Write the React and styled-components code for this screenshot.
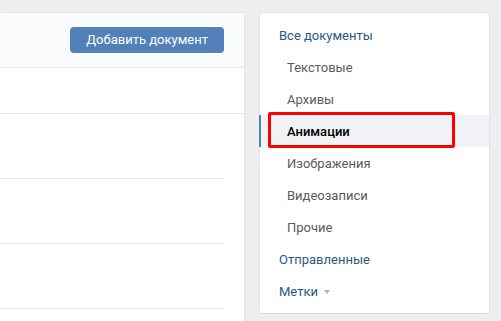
import React from "react";
import styled, { createGlobalStyle } from "styled-components";

const Global = createGlobalStyle`
  html, body { margin: 0; padding: 0; overflow: hidden; background: #edeef0; }
  body { font-family: Roboto, "Open Sans", "Liberation Sans", sans-serif; font-size: 13px; -webkit-font-smoothing: antialiased; }
  * { box-sizing: border-box; }
`;

const Page = styled.div`
  display: flex;
  align-items: flex-start;
  gap: 14px;
  padding-top: 12px;
  width: 501px;
  height: 321px;
  overflow: hidden;
`;

const Main = styled.div`
  flex: 0 0 246px;
  margin-left: -1px;
  background: #fff;
  border: 1px solid #e3e4e8;
  border-radius: 4px;
  min-height: 330px;
`;

const Header = styled.div`
  display: flex;
  justify-content: flex-end;
  align-items: center;
  height: 55px;
  padding: 0 20px;
  background: #fafbfc;
  border-bottom: 1px solid #e7e8ec;
`;

const Button = styled.button`
  height: 26px;
  padding: 0 16px;
  border: 0;
  border-radius: 4px;
  background: #5181b8;
  color: #fff;
  font-family: inherit;
  font-size: 13px;
  line-height: 26px;
  white-space: nowrap;
  cursor: pointer;
`;

const Bar = styled.div`
  height: 46px;
  border-bottom: 1px solid #e7e8ec;
`;

const Row = styled.div`
  height: 65px;
  margin-right: 20px;
  border-bottom: 1px solid #e7e8ec;
`;

const Side = styled.nav`
  flex: 0 0 231px;
  background: #fff;
  border: 1px solid #e3e4e8;
  border-bottom-color: #d7d8db;
  border-radius: 4px;
  padding: 6px 0;
`;

const Item = styled.div`
  position: relative;
  display: flex;
  align-items: center;
  height: 32px;
  padding-left: ${p => (p.$sub ? 27 : 19)}px;
  color: ${p => (p.$sub ? "#5a5a5a" : "#2a5885")};
  white-space: nowrap;
  cursor: pointer;
  ${p =>
    p.$active &&
    `
    margin-left: -1px;
    border-left: 2px solid #5181b8;
    padding-left: 26px;
    background: #f0f2f5;
    color: #000;
    font-weight: 500;
  `}
`;

const Caret = styled.span`
  display: inline-block;
  margin-left: 6px;
  margin-top: 2px;
  width: 0;
  height: 0;
  border-left: 3.5px solid transparent;
  border-right: 3.5px solid transparent;
  border-top: 4px solid #a8b3c1;
`;

const Highlight = styled.span`
  position: absolute;
  left: 7px;
  top: -3px;
  width: 187px;
  height: 36px;
  border: 3px solid #ff0000;
  border-radius: 2px;
  pointer-events: none;
`;

const items = [
  { label: "Все документы" },
  { label: "Текстовые", sub: true },
  { label: "Архивы", sub: true },
  { label: "Анимации", sub: true, active: true },
  { label: "Изображения", sub: true },
  { label: "Видеозаписи", sub: true },
  { label: "Прочие", sub: true },
  { label: "Отправленные" },
  { label: "Метки", caret: true },
];

export default function App() {
  return (
    <>
      <Global />
      <Page>
        <Main>
          <Header>
            <Button>Добавить документ</Button>
          </Header>
          <Bar />
          <Row />
          <Row />
          <Row />
        </Main>
        <Side>
          {items.map(it => (
            <Item key={it.label} $sub={it.sub} $active={it.active}>
              {it.label}
              {it.caret && <Caret />}
              {it.active && <Highlight />}
            </Item>
          ))}
        </Side>
      </Page>
    </>
  );
}
